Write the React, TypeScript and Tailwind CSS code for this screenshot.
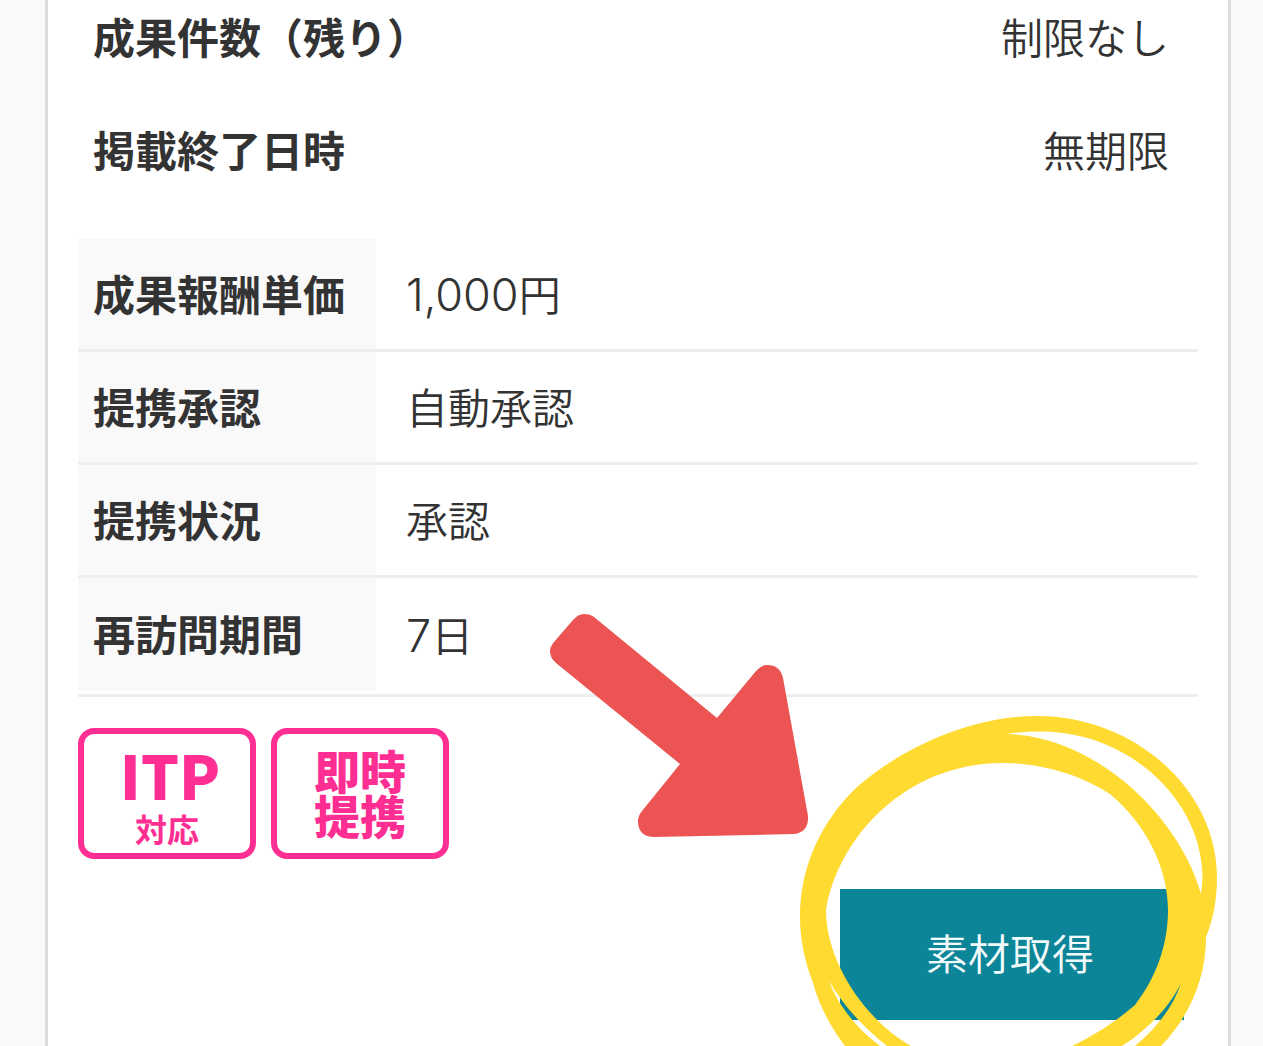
const summary = [
  { label: "成果件数（残り）", value: "制限なし" },
  { label: "掲載終了日時", value: "無期限" },
];

const details = [
  { label: "成果報酬単価", amount: "1,000", value: "円" },
  { label: "提携承認", value: "自動承認" },
  { label: "提携状況", value: "承認" },
  { label: "再訪問期間", amount: "7", value: "日" },
];

/* Outer edge, inner edge, then the three slits between the two strokes of the ring. */
const ring = [
  "M845 1046C830 1026 819 1005 813 983C805 962 800 940 800 917C800 870 818 828 850 794C885 758 962 716 1037 716C1135 716 1217 790 1217 877C1217 900 1213 920 1206 937C1206 978 1190 1016 1161 1046Z",
  "M911 1046C865 1020 826 962 826 910C838 838 905 763 1003 763C1042 763 1081 775 1110 794C1146 824 1168 868 1168 910C1168 945 1156 978 1135 1005C1117 1021 1093 1036 1072 1046Z",
  "M1007 734C1026 731 1045 731 1063 733C1135 742 1197 800 1202 868C1203 877 1202 886 1201 894C1180 818 1098 737 1007 734Z",
  "M829 981C838 1005 856 1028 880 1046L887 1046C862 1026 843 1005 829 981Z",
  "M1181 983C1170 1007 1147 1030 1122 1046L1135 1046C1158 1027 1174 1005 1181 983Z",
].join("");

function Annotation() {
  return (
    <svg
      aria-hidden="true"
      viewBox="540 600 690 446"
      className="pointer-events-none absolute -top-[289px] -left-[300px] h-[446px] w-[690px] max-w-none"
    >
      <path
        fill="#ec5353"
        d="M594 617L717 718L756 671Q761 665 767 665Q780 665 783 678L808 816Q809 832 794 834L653 837Q638 836 638 821Q638 816 642 811L680 764L556 663Q550 658 550 651Q550 647 554 642L573 620Q578 614 584 614Q590 614 594 617Z"
      />
      <path fill="#ffda30" fillRule="evenodd" d={ring} />
    </svg>
  );
}

export default function App() {
  return (
    <div className="flex h-screen overflow-hidden bg-[#f9f9f9] pr-8 pl-[45px] font-['Inter','Noto_Sans_CJK_JP',sans-serif] text-[42px] leading-[60px] text-[#333]">
      <main className="grow border-x-3 border-[#ddd] bg-white px-[30px]">
        <table className="-mt-[18px] w-full" lang="ja">
          <tbody>
            {summary.map((row) => (
              <tr key={row.label} className="h-[113px]">
                <th scope="row" className="pl-[15px] text-left font-bold">
                  {row.label}
                </th>
                <td className="pr-[29px] text-right font-[350]">{row.value}</td>
              </tr>
            ))}
          </tbody>
        </table>

        <div className="mt-[31px] border-b-3 border-[#eee] pb-[3px]">
          <table className="w-full table-fixed border-separate border-spacing-0" lang="ja">
            <tbody>
              {details.map((row) => (
                <tr key={row.label} className="group h-[113px]">
                  <th
                    scope="row"
                    className="w-[298px] border-b-3 border-[#eee] bg-[#f9f9f9] pt-[3px] pl-[15px] text-left font-bold whitespace-nowrap group-last:border-b-0"
                  >
                    {row.label}
                  </th>
                  <td className="border-b-3 border-[#eee] pt-[3px] pl-[30px] font-[350] group-last:border-b-0">
                    {row.amount && <span className="text-[45px] font-light">{row.amount}</span>}
                    {row.value}
                  </td>
                </tr>
              ))}
            </tbody>
          </table>
        </div>

        <div className="mt-[31px] flex gap-[15px] text-center font-['Noto_Sans_CJK_JP',sans-serif] font-black text-[#ff2e93]" lang="ja">
          <div className="flex h-[131px] w-[178px] flex-col items-center justify-center rounded-2xl border-6 border-[#ff2e93] pt-2">
            <span className="pl-1.5 text-[60px] leading-[60px]">ITP</span>
            <span className="text-[32px] leading-[48px] font-bold">対応</span>
          </div>
          <div className="flex h-[131px] w-[178px] flex-col items-center justify-center rounded-2xl border-6 border-[#ff2e93] pb-1 text-[46px] leading-[45px]">
            <p>
              即時
              <br />
              提携
            </p>
          </div>
        </div>

        <div className="relative mt-[30px] mr-[14px] ml-auto w-[344px]">
          <button type="button" className="h-[131px] w-full bg-[#0d8599] pr-1 font-[350] text-[#f2fafb]" lang="ja">
            素材取得
          </button>
          <Annotation />
        </div>
      </main>
    </div>
  );
}
